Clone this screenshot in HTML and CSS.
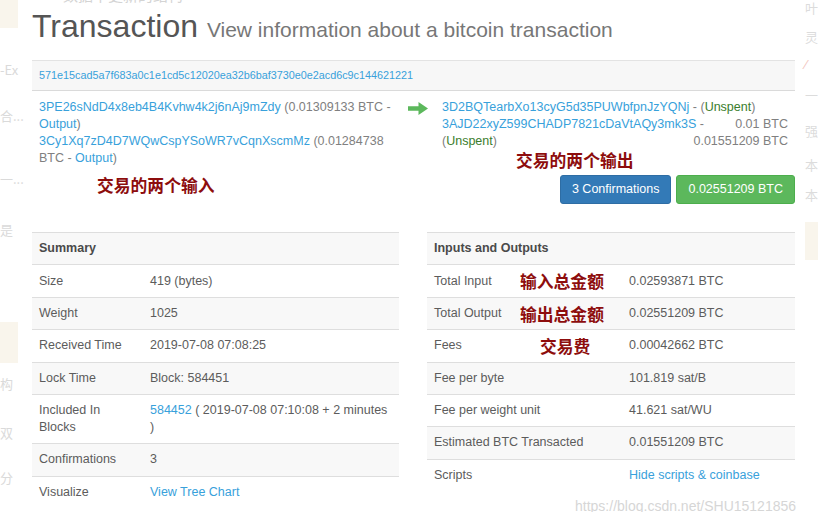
FILE: index.html
```html
<!DOCTYPE html>
<html lang="en">
<head>
<meta charset="utf-8">
<title>Transaction</title>
<link rel="stylesheet" href="styles.css">
</head>
<body>
<div class="page">
  <aside class="gutter gutter-left">
    <div class="paper paper-top"></div>
    <span class="ghost" style="top:62px">-Ex</span>
    <span class="ghost" style="top:108px">合...</span>
    <span class="ghost" style="top:171px">一...</span>
    <span class="ghost" style="top:222px">是</span>
    <div class="paper paper-mid"></div>
    <span class="ghost" style="top:376px">构</span>
    <span class="ghost" style="top:425px">双</span>
    <span class="ghost" style="top:470px">分</span>
  </aside>

  <main class="main">
    <span class="ghost-top">数据中更新的结构</span>
    <h1 class="title">Transaction <small>View information about a bitcoin transaction</small></h1>

    <div class="hash"><a href="#">571e15cad5a7f683a0c1e1cd5c12020ea32b6baf3730e0e2acd6c9c144621221</a></div>

    <div class="tx">
      <div class="tx-in">
        <div class="line"><a href="#">3PE26sNdD4x8eb4B4Kvhw4k2j6nAj9mZdy</a> (0.01309133 BTC -</div>
        <div class="line"><a href="#">Output</a>)</div>
        <div class="line"><a href="#">3Cy1Xq7zD4D7WQwCspYSoWR7vCqnXscmMz</a> (0.01284738</div>
        <div class="line">BTC - <a href="#">Output</a>)</div>
      </div>
      <div class="tx-arrow">
        <svg width="20" height="13" viewBox="0 0 20 13"><path d="M0 4.2H10.5V0L20 6.5L10.5 13V8.8H0Z" fill="#5cb85c"/></svg>
      </div>
      <div class="tx-out">
        <div class="line"><a href="#">3D2BQTearbXo13cyG5d35PUWbfpnJzYQNj</a> - (<span class="unspent">Unspent</span>)</div>
        <div class="line split"><span><a href="#">3AJD22xyZ599CHADP7821cDaVtAQy3mk3S</a> -</span><span>0.01 BTC</span></div>
        <div class="line split"><span>(<span class="unspent">Unspent</span>)</span><span>0.01551209 BTC</span></div>
      </div>
      <span class="note note-in">交易的两个输入</span>
      <span class="note note-out">交易的两个输出</span>
    </div>

    <div class="actions">
      <button class="btn btn-blue">3 Confirmations</button>
      <button class="btn btn-green">0.02551209 BTC</button>
    </div>

    <div class="tables">
      <table class="grid summary">
        <colgroup><col class="c-label"><col></colgroup>
        <tr><th colspan="2">Summary</th></tr>
        <tr><td>Size</td><td>419 (bytes)</td></tr>
        <tr><td>Weight</td><td>1025</td></tr>
        <tr><td>Received Time</td><td>2019-07-08 07:08:25</td></tr>
        <tr><td>Lock Time</td><td>Block: 584451</td></tr>
        <tr><td>Included In Blocks</td><td><a href="#">584452</a> ( 2019-07-08 07:10:08 + 2 minutes<br>)</td></tr>
        <tr><td>Confirmations</td><td>3</td></tr>
        <tr><td>Visualize</td><td><a href="#">View Tree Chart</a></td></tr>
      </table>

      <table class="grid io">
        <colgroup><col class="c-label"><col></colgroup>
        <tr><th colspan="2">Inputs and Outputs</th></tr>
        <tr><td class="lab">Total Input<span class="note note-cell">输入总金额</span></td><td>0.02593871 BTC</td></tr>
        <tr><td class="lab">Total Output<span class="note note-cell">输出总金额</span></td><td>0.02551209 BTC</td></tr>
        <tr><td class="lab">Fees<span class="note note-cell note-fee">交易费</span></td><td>0.00042662 BTC</td></tr>
        <tr><td>Fee per byte</td><td>101.819 sat/B</td></tr>
        <tr><td>Fee per weight unit</td><td>41.621 sat/WU</td></tr>
        <tr><td>Estimated BTC Transacted</td><td>0.01551209 BTC</td></tr>
        <tr><td>Scripts</td><td><a href="#">Hide scripts &amp; coinbase</a></td></tr>
      </table>
    </div>
  </main>

  <aside class="gutter gutter-right">
    <span class="ghost" style="top:0px">叶</span>
    <span class="ghost" style="top:29px">灵</span>
    <span class="ghost red" style="top:56px">⁄</span>
    <span class="ghost" style="top:87px">一</span>
    <span class="ghost" style="top:123px">强</span>
    <span class="ghost" style="top:157px">本</span>
    <span class="ghost" style="top:187px">本</span>
    <div class="paper paper-right"></div>
  </aside>

  <span class="watermark">https://blog.csdn.net/SHU15121856</span>
</div>
</body>
</html>
```
FILE: styles.css
```css
* { box-sizing: border-box; }

body {
  margin: 0;
  background: #fff;
  font-family: "Liberation Sans", Arial, "Noto Sans CJK SC", sans-serif;
}

.page {
  position: relative;
  width: 818px;
  height: 512px;
  overflow: hidden;
  display: grid;
  grid-template-columns: 32px 763px 23px;
}

a { color: #38a1db; text-decoration: none; }

/* gutters with faint residue from the page behind */
.gutter { position: relative; }
.ghost {
  position: absolute;
  left: 0;
  font-size: 13px;
  line-height: 15px;
  color: #dadada;
  white-space: nowrap;
  font-family: "Noto Sans CJK SC", "Liberation Sans", sans-serif;
}
.gutter-right .ghost { left: 10px; color: #dcdcdc; }
.ghost.red { color: #f2c4bc; }
.paper {
  position: absolute;
  left: 0;
  width: 18px;
  background: #f9f5ec;
}
.paper-top { top: 0; height: 28px; }
.paper-mid { top: 322px; height: 41px; }
.paper-right { left: 10px; top: 222px; width: 13px; height: 38px; }

.main { position: relative; min-width: 0; }

.ghost-top {
  position: absolute;
  left: 31px;
  top: -13px;
  font-size: 15px;
  line-height: 16px;
  color: #d4d4d4;
  font-family: "Noto Sans CJK SC", sans-serif;
}

.title {
  margin: 9px 0 0;
  height: 35px;
  font-size: 32px;
  line-height: 35px;
  font-weight: normal;
  color: #555;
  white-space: nowrap;
}
.title small {
  font-size: 21px;
  line-height: 1;
  color: #777;
}

.hash {
  margin-top: 16px;
  padding: 7px;
  background: #f7f7f7;
  border-top: 1px solid #e3e3e3;
  border-bottom: 1px solid #dadada;
  font-size: 10.8px;
  line-height: 15px;
}

.tx {
  position: relative;
  margin-top: 8px;
  display: grid;
  grid-template-columns: 376px 34px 1fr;
  font-size: 12.5px;
  line-height: 17px;
  color: #808080;
}
.tx-in { padding-left: 7px; }
.tx-out { padding-right: 7px; }
.tx-arrow svg { display: block; margin-top: 2.5px; }
.line { white-space: nowrap; }
.split { display: flex; justify-content: space-between; }
.unspent { color: #3a7d2c; }

.note {
  position: absolute;
  font-family: "Noto Sans CJK SC", sans-serif;
  font-weight: 700;
  font-size: 16.8px;
  line-height: 24px;
  color: #8d0d0d;
  white-space: nowrap;
}
.note-in { left: 65px; top: 73.5px; }
.note-out { left: 484px; top: 48.5px; }

.actions {
  margin-top: 8px;
  display: flex;
  justify-content: flex-end;
  gap: 5px;
}
.btn {
  font-family: inherit;
  font-size: 12.5px;
  line-height: 17px;
  padding: 5px 11px;
  color: #fff;
  border-radius: 3px;
  border: 1px solid transparent;
}
.btn-blue { background: #337ab7; border-color: #2e6da4; }
.btn-green { background: #5cb85c; border-color: #4cae4c; }

.tables {
  margin-top: 28px;
  display: grid;
  grid-template-columns: 367px 368px;
  column-gap: 28px;
  align-items: start;
}

.grid {
  width: 100%;
  border-collapse: collapse;
  table-layout: fixed;
  font-size: 12.5px;
  line-height: 17px;
  color: #5c5c5c;
}
.grid th,
.grid td {
  padding: 7.2px 7px;
  border-top: 1px solid #dedede;
  text-align: left;
  vertical-align: top;
}
.grid th { font-weight: bold; color: #4a4a4a; }
.grid tr:nth-child(odd) { background: #f8f8f8; }
.summary .c-label { width: 111px; }
.io .c-label { width: 195px; }

.lab { position: relative; }
.note-cell { left: 93px; top: 4px; }
.note-fee { left: 113px; }

.watermark {
  position: absolute;
  left: 575px;
  top: 498px;
  font-size: 14px;
  line-height: 17px;
  color: #d6d6d6;
  white-space: nowrap;
}
```
